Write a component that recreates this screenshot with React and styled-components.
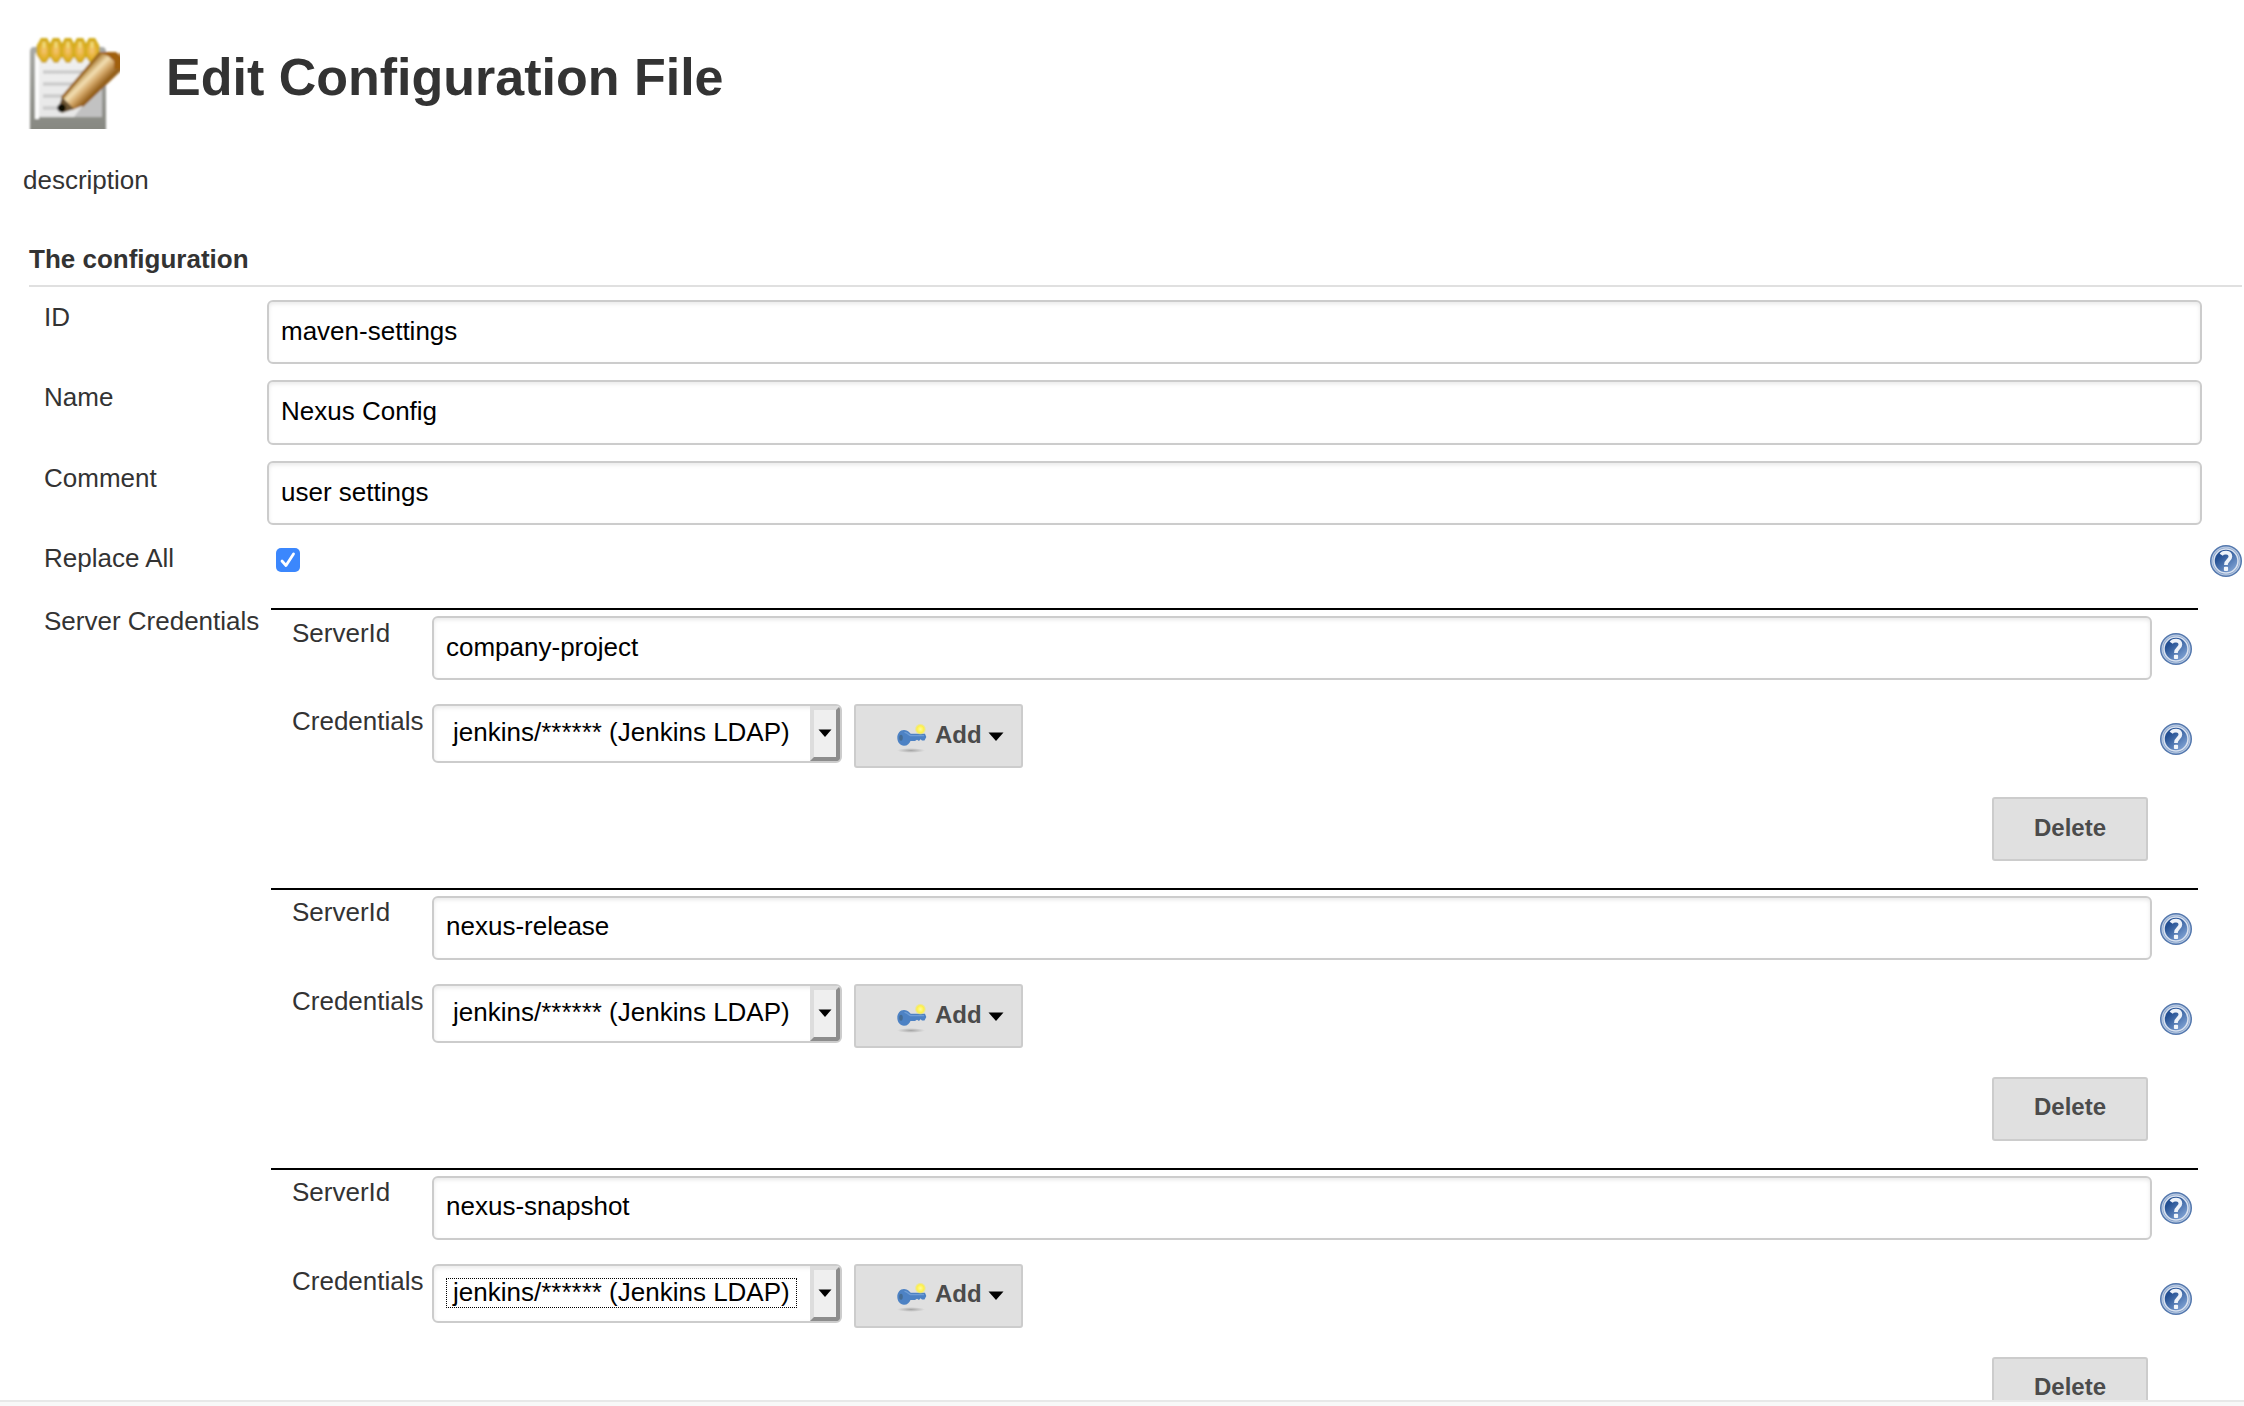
import React from "react";
import styled, { createGlobalStyle } from "styled-components";

const Global = createGlobalStyle`
  html, body { margin: 0; padding: 0; background: #fff; }
  * { box-sizing: border-box; }
  body { font-family: "Liberation Sans", Arial, sans-serif; font-size: 26px; line-height: 30px; color: #333; }
`;

const Page = styled.div`
  width: 2244px;
  height: 1406px;
  display: flex;
  flex-direction: column;
  overflow: hidden;
  background: #fff;
`;
const Content = styled.main`
  height: 1400px;
  flex: none;
  overflow: hidden;
`;
const Footer = styled.footer`
  height: 6px;
  flex: none;
  background: #f8f8f8;
  border-top: 2px solid #e8e8e8;
`;
const Header = styled.header`
  display: flex;
  align-items: flex-start;
  padding: 33px 0 0 24px;
  height: 165px;
  gap: 46px;
`;
const Title = styled.h1`
  margin: 14px 0 0;
  font-size: 52px;
  line-height: 60px;
  font-weight: bold;
  white-space: nowrap;
`;
const Description = styled.div`
  padding-left: 23px;
  height: 79px;
`;
const SectionTitle = styled.div`
  margin: 0 2px 0 29px;
  height: 43px;
  font-weight: bold;
  border-bottom: 2px solid #e0e0e0;
`;
const Form = styled.div`
  padding-top: 13px;
`;
const Row = styled.div`
  display: grid;
  grid-template-columns: 223px 1935px 1fr;
  padding-left: 44px;
  height: ${(p) => p.$height}px;
`;
const Label = styled.label`
  padding-top: ${(p) => p.$top ?? 2}px;
  margin-top: ${(p) => p.$shift ?? 0}px;
  white-space: nowrap;
`;
const TextInput = styled.input`
  display: block;
  width: 100%;
  height: ${(p) => p.$height ?? 64}px;
  padding: 0 12px ${(p) => p.$lift ?? 2}px;
  font: inherit;
  color: #000;
  background: #fff;
  border: 2px solid #ccc;
  border-radius: 6px;
  box-shadow: inset 0 2px 4px rgba(0, 0, 0, 0.09);
  outline: none;
`;
const CheckCell = styled.div`
  padding: 7px 0 0 9px;
`;
const CheckMark = styled.span`
  display: grid;
  place-items: center;
  width: 24px;
  height: 24px;
  border-radius: 5px;
  background: #3b87fd;
`;
const HelpCell = styled.div`
  padding: ${(p) => p.$top}px 0 0 8px;
`;
const HelpIcon = styled.svg`
  display: block;
  width: 32px;
  height: 32px;
`;
const Repeatable = styled.div`
  width: 1927px;
  margin-left: 4px;
`;
const Server = styled.section`
  height: 280px;
  border-top: 2px solid #000;
  padding-top: 6px;
`;
const ServerRow = styled.div`
  display: grid;
  grid-template-columns: 140px 1720px 1fr;
  padding-left: 21px;
  height: ${(p) => p.$height}px;
`;
const Controls = styled.div`
  display: flex;
  align-items: flex-start;
  gap: 12px;
`;
const Select = styled.div`
  display: flex;
  width: 410px;
  height: 59px;
  border: 2px solid #ccc;
  border-radius: 6px;
  box-shadow: inset 0 2px 4px rgba(0, 0, 0, 0.09);
  color: #000;
  overflow: hidden;
`;
const Value = styled.span`
  width: 351px;
  height: 30px;
  margin: 12px 13px 0 12px;
  padding-left: 6px;
  line-height: 27px;
  white-space: nowrap;
  border: 1px dotted ${(p) => (p.$focused ? "#000" : "transparent")};
`;
const Arrow = styled.span`
  display: grid;
  place-items: center;
  width: 30px;
  height: 55px;
  padding-bottom: 1px;
  background: #efefef;
  border: 4px solid;
  border-color: #ddd #8d8d8d #8d8d8d #ddd;
`;
const Button = styled.button`
  display: flex;
  align-items: center;
  justify-content: center;
  width: 156px;
  height: 64px;
  padding: 0 0 ${(p) => p.$lift ?? 3}px;
  font: bold 24px/28px "Liberation Sans", Arial, sans-serif;
  color: #4b4b4b;
  background: #e0e0e0;
  border: 2px solid #ccc;
  border-radius: 3px;
`;
const AddButton = styled(Button)`
  justify-content: flex-start;
  width: 169px;
  padding-left: 40px;
`;
const KeyIcon = styled.svg`
  flex: none;
  width: 32px;
  height: 32px;
  margin-top: 6px;
`;
const AddLabel = styled.span`
  margin: 0 6px 0 7px;
`;
const Caret = styled.svg`
  width: 16px;
  height: 9px;
  margin-top: 3px;
`;
const Actions = styled.div`
  display: flex;
  justify-content: flex-end;
  padding-right: 50px;
`;

function Help() {
  return (
    <HelpIcon viewBox="0 0 32 32">
      <defs>
        <linearGradient id="helpFill" x1="0.1" y1="0.2" x2="0.8" y2="1">
          <stop offset="0.15" stopColor="#234f92" />
          <stop offset="1" stopColor="#86a8d8" />
        </linearGradient>
      </defs>
      <circle cx="16" cy="16" r="16" fill="#5478ae" />
      <circle cx="16" cy="16" r="13.9" fill="#7c9ac6" stroke="#b9cae2" strokeWidth="1.2" />
      <circle cx="16" cy="16" r="12" fill="url(#helpFill)" stroke="#d9e2f0" strokeWidth="1.6" />
      <path d="M11.2 9.8C13 6.8 20.4 6.6 20.4 11.6C20.4 15.4 15.9 15 15.9 20" fill="none" stroke="#eef3fa" strokeWidth="3.7" />
      <rect x="13.9" y="21.8" width="4.2" height="4.2" rx="1" fill="#f2f6fb" />
    </HelpIcon>
  );
}

function Key() {
  return (
    <KeyIcon viewBox="0 0 32 32">
      <defs>
        <radialGradient id="keyShade">
          <stop offset="0" stopColor="#000" stopOpacity="0.26" />
          <stop offset="1" stopColor="#000" stopOpacity="0" />
        </radialGradient>
        <radialGradient id="keyGlow">
          <stop offset="0" stopColor="#fffb9a" />
          <stop offset="0.6" stopColor="#fdf04a" />
          <stop offset="1" stopColor="#f5e94a" stopOpacity="0" />
        </radialGradient>
        <filter id="keySoft"><feGaussianBlur stdDeviation="0.5" /></filter>
      </defs>
      <ellipse cx="15" cy="28.5" rx="14" ry="2.4" fill="url(#keyShade)" />
      <g filter="url(#keySoft)">
        <path d="M8 8C12 8 13.5 11 15 11.8H29L30.3 15L28.5 18.4H26L24.5 17.2L23 19L21 17.8L19 19H14.5C13.5 21.5 11.5 23.8 8 23.8C4 23.8 1.3 20 1.3 15.8C1.3 11.5 4 8 8 8Z" fill="#4d82c4" />
        <path d="M8.5 10.4C11.5 10.4 12.5 13 14.5 13.6H28" fill="none" stroke="#6f9dd6" strokeWidth="1.3" />
        <ellipse cx="5" cy="15.8" rx="1.8" ry="3" fill="#456c94" />
      </g>
      <circle cx="24.4" cy="7.2" r="5.8" fill="url(#keyGlow)" />
    </KeyIcon>
  );
}

const RINGS = [20, 32, 44, 56, 68];

function Notepad() {
  return (
    <svg width="96" height="96" viewBox="0 0 96 96">
      <defs>
        <linearGradient id="padEdge" x1="0" y1="0" x2="0" y2="1">
          <stop offset="0" stopColor="#a9aaa6" />
          <stop offset="1" stopColor="#85867f" />
        </linearGradient>
        <linearGradient id="padPaper" x1="0" y1="0" x2="0" y2="1">
          <stop offset="0" stopColor="#f1f1f1" />
          <stop offset="1" stopColor="#e6e6e6" />
        </linearGradient>
        <radialGradient id="padRing">
          <stop offset="0" stopColor="#f6c77a" />
          <stop offset="0.55" stopColor="#e5b232" />
          <stop offset="1" stopColor="#cdaa14" />
        </radialGradient>
        <linearGradient id="padWood" gradientUnits="userSpaceOnUse" x1="58" y1="40" x2="74" y2="56">
          <stop offset="0" stopColor="#b0823a" />
          <stop offset="0.35" stopColor="#f3dfb2" />
          <stop offset="0.65" stopColor="#d2a566" />
          <stop offset="1" stopColor="#94601c" />
        </linearGradient>
        <filter id="padSoft"><feGaussianBlur stdDeviation="1.3" /></filter>
      </defs>
      <g filter="url(#padSoft)">
        <path d="M6 19Q6 14 10 14H78Q82 14 82 19V102H6Z" fill="url(#padEdge)" />
        <path d="M11 20H78V84H14Q11 84 11 80Z" fill="url(#padPaper)" />
        <path d="M13 22V86" stroke="#fcfcfc" strokeWidth="4" />
        <path d="M19 39H62M19 51H52M19 63H44M19 75H36" stroke="#cccccc" strokeWidth="3.5" />
        <path d="M56 76L78 52V84H50Z" fill="#a2a2a2" opacity="0.55" />
        {RINGS.map((x) => (
          <path
            key={x}
            d={`M${x - 3} 5H${x + 3}L${x + 7.5} 13V22L${x + 2} 30H${x - 2}L${x - 7.5} 22V13Z`}
            fill="url(#padRing)"
          />
        ))}
        {RINGS.map((x) => (
          <path key={x} d={`M${x} 9V15`} stroke="#f0dc78" strokeWidth="3" />
        ))}
        <path d="M76 20L100 20V34L58 73L48 77L36 76L38 65Z" fill="url(#padWood)" />
        <path d="M100 33L58 73" stroke="#94601c" strokeWidth="3" />
        <path d="M38 65L76 20" stroke="#9c6a22" strokeWidth="3" />
        <path d="M74 19H92L100 26V36H90V28L84 23Z" fill="#a1600a" />
        <path d="M38 64L50 76L38 80L34 76Z" fill="#6b5330" />
        <circle cx="37.5" cy="75" r="4.2" fill="#0c0905" />
      </g>
    </svg>
  );
}

function ServerEntry({ id, first, last }) {
  return (
    <Server>
      <ServerRow $height={88}>
        <Label $top={first ? 2 : 1}>ServerId</Label>
        <TextInput defaultValue={id} $lift={first ? 2 : 4} />
        <HelpCell $top={last ? 16 : 17}><Help /></HelpCell>
      </ServerRow>
      <ServerRow $height={93}>
        <Label>Credentials</Label>
        <Controls>
          <Select>
            <Value $focused={last}>jenkins/****** (Jenkins LDAP)</Value>
            <Arrow>
              <svg width="14" height="8" viewBox="0 0 14 8"><path d="M0.5 0.5H13.5L7 8Z" fill="#000" /></svg>
            </Arrow>
          </Select>
          <AddButton $lift={last ? 4 : 3}>
            <Key />
            <AddLabel>Add</AddLabel>
            <Caret viewBox="0 0 16 9"><path d="M0.5 0.5H15.5L8 9Z" fill="#000" /></Caret>
          </AddButton>
        </Controls>
        <HelpCell $top={19}><Help /></HelpCell>
      </ServerRow>
      <Actions>
        <Button $lift={first ? 3 : 5}>Delete</Button>
      </Actions>
    </Server>
  );
}

export default function App() {
  return (
    <Page>
      <Global />
      <Content>
        <Header>
          <Notepad />
          <Title>Edit Configuration File</Title>
        </Header>
        <Description>description</Description>
        <SectionTitle>The configuration</SectionTitle>
        <Form>
          <Row $height={80}>
            <Label>ID</Label>
            <TextInput defaultValue="maven-settings" />
          </Row>
          <Row $height={81}>
            <Label>Name</Label>
            <TextInput defaultValue="Nexus Config" $height={65} $lift={3} />
          </Row>
          <Row $height={80}>
            <Label>Comment</Label>
            <TextInput defaultValue="user settings" />
          </Row>
          <Row $height={67}>
            <Label>Replace All</Label>
            <CheckCell>
              <CheckMark>
                <svg width="16" height="16" viewBox="0 0 16 16"><path d="M2 9L6 13.5L13.5 2" fill="none" stroke="#fff" strokeWidth="2.8" strokeLinecap="round" strokeLinejoin="round" /></svg>
              </CheckMark>
            </CheckCell>
            <HelpCell $top={4}><Help /></HelpCell>
          </Row>
          <Row $height={840}>
            <Label $top={0} $shift={-2}>Server Credentials</Label>
            <Repeatable>
              <ServerEntry id="company-project" first />
              <ServerEntry id="nexus-release" />
              <ServerEntry id="nexus-snapshot" last />
            </Repeatable>
          </Row>
        </Form>
      </Content>
      <Footer />
    </Page>
  );
}
